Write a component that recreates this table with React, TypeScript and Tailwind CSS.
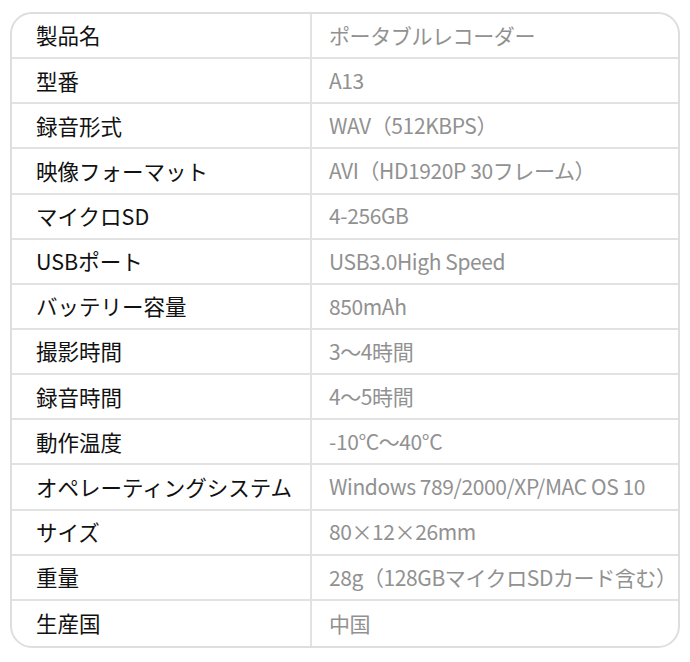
const specs: [string, string][] = [
  ['製品名', 'ポータブルレコーダー'],
  ['型番', 'A13'],
  ['録音形式', 'WAV（512KBPS）'],
  ['映像フォーマット', 'AVI（HD1920P 30フレーム）'],
  ['マイクロSD', '4-256GB'],
  ['USBポート', 'USB3.0High Speed'],
  ['バッテリー容量', '850mAh'],
  ['撮影時間', '3～4時間'],
  ['録音時間', '4～5時間'],
  ['動作温度', '-10°C～40°C'],
  ['オペレーティングシステム', 'Windows 789/2000/XP/MAC OS 10'],
  ['サイズ', '80×12×26mm'],
  ['重量', '28g（128GBマイクロSDカード含む）'],
  ['生産国', '中国'],
];

export default function App() {
  return (
    <div
      className="w-[690px] h-[662px] bg-white pt-[12px] pl-[10px] pr-[10px]"
      style={{ fontFamily: '"Noto Sans CJK JP", "Noto Sans", sans-serif' }}
    >
      <div className="rounded-[22px] border-2 border-[#dedede] overflow-hidden">
        {specs.map(([label, value], i) => (
          <div
            key={label}
            className={`grid grid-cols-[300px_1fr] h-[45.15px] ${i < specs.length - 1 ? 'border-b-2 border-[#e2e2e2]' : ''}`}
          >
            <div className="flex items-center pl-[24px] border-r-2 border-[#e2e2e2] text-[21.5px] text-[#111]">
              {label}
            </div>
            <div className="flex items-center pl-[17px] text-[21px] tracking-[-0.4px] whitespace-nowrap text-[#919191]">
              {value}
            </div>
          </div>
        ))}
      </div>
    </div>
  );
}
